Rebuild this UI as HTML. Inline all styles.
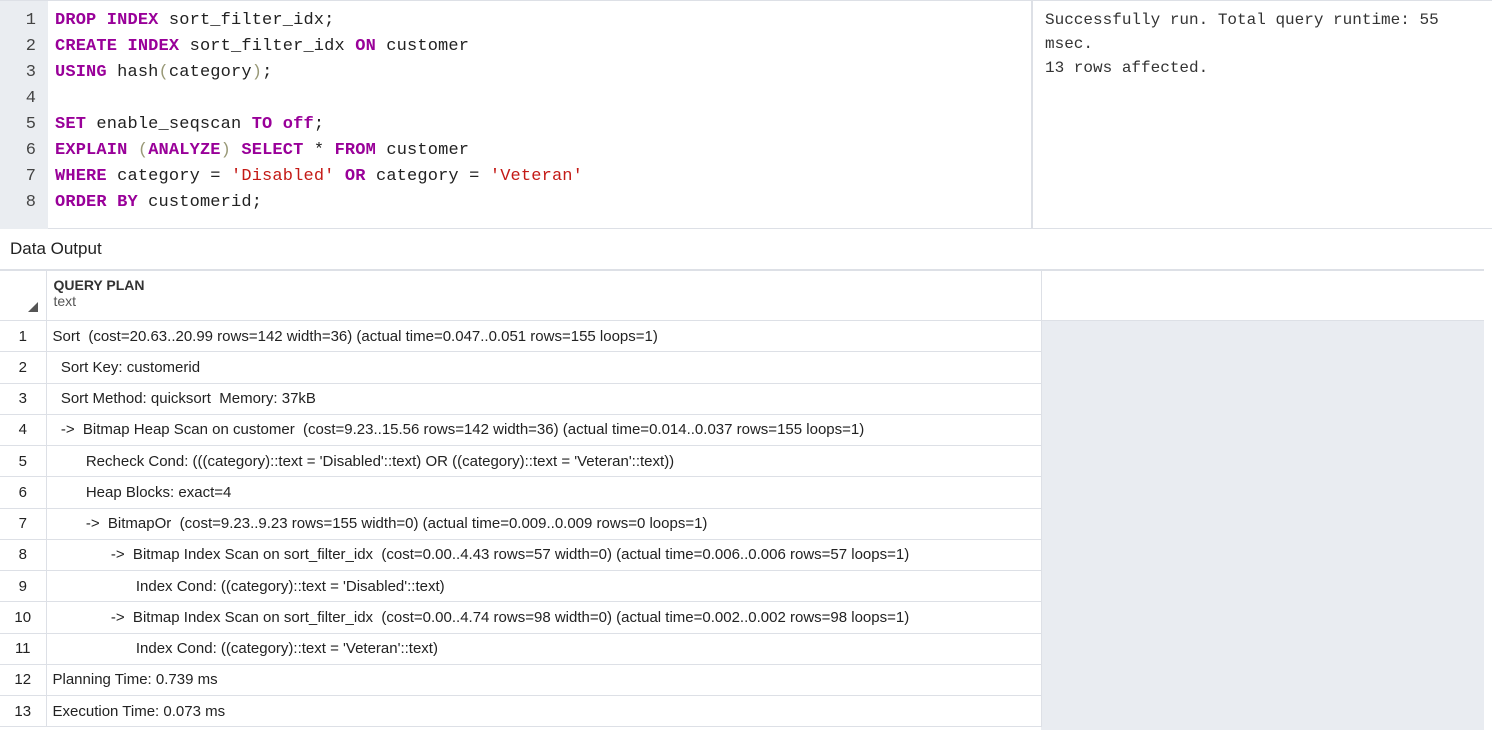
<!DOCTYPE html>
<html><head><meta charset="utf-8"><style>
*{margin:0;padding:0;box-sizing:border-box}
body{width:1492px;height:730px;background:#fff;position:relative;overflow:hidden;font-family:"Liberation Sans",sans-serif}
.ed{position:absolute;left:0;top:0;width:1031px;height:229px;border-top:1px solid #dde0e6;border-bottom:1px solid #dde0e6}
.gut{position:absolute;left:0;top:0;width:48px;height:228px;background:#eaedf1}
.code{position:absolute;left:0;top:7px;font-family:"Liberation Mono",monospace;font-size:17px;letter-spacing:0.15px;color:#222;white-space:pre;line-height:26px}
.ln{display:inline-block;width:36px;text-align:right;color:#444;margin-right:19px;letter-spacing:0}
.k{color:#990099;font-weight:bold}
.s{color:#c41a16}
.p{color:#999977}
.msg{position:absolute;left:1031px;top:0;width:461px;height:229px;border-left:2px solid #dde0e6;border-top:1px solid #dde0e6;border-bottom:1px solid #dde0e6;font-family:"Liberation Mono",monospace;font-size:16px;color:#333;line-height:24px;padding:7px 0 0 12px;white-space:pre}
.dh{position:absolute;left:0;top:230px;width:1484px;height:40px;border-bottom:1px solid #dde0e6;font-size:17px;color:#222;padding:9px 0 0 10px}
.grey{position:absolute;left:1041px;top:320px;width:443px;height:410px;background:#e9ecf1}
table{position:absolute;left:0;top:270px;border-collapse:collapse;font-size:15px;color:#222}
td{border:1px solid #dde0e6;height:31.25px;white-space:pre;padding:0 0 0 6px}
td.i{width:46px;text-align:center;padding:0;border-left:none}
tr.h td{height:50px;vertical-align:top;padding-top:6px}
.tri{position:absolute;left:28px;top:302px;width:0;height:0;border-left:10px solid transparent;border-bottom:10px solid #555}
</style></head><body>
<div class="ed"><div class="gut"></div>
<div class="code"><span class="ln">1</span><span class="k">DROP INDEX</span> sort_filter_idx;
<span class="ln">2</span><span class="k">CREATE INDEX</span> sort_filter_idx <span class="k">ON</span> customer
<span class="ln">3</span><span class="k">USING</span> hash<span class="p">(</span>category<span class="p">)</span>;
<span class="ln">4</span>
<span class="ln">5</span><span class="k">SET</span> enable_seqscan <span class="k">TO off</span>;
<span class="ln">6</span><span class="k">EXPLAIN</span> <span class="p">(</span><span class="k">ANALYZE</span><span class="p">)</span> <span class="k">SELECT</span> * <span class="k">FROM</span> customer
<span class="ln">7</span><span class="k">WHERE</span> category = <span class="s">'Disabled'</span> <span class="k">OR</span> category = <span class="s">'Veteran'</span>
<span class="ln">8</span><span class="k">ORDER BY</span> customerid;</div></div>
<div class="msg">Successfully run. Total query runtime: 55
msec.
13 rows affected.</div>
<div class="dh">Data Output</div>
<div class="grey"></div>
<table>
<tr class="h"><td class="i"></td><td style="width:995px;padding-left:7px;font-size:14px"><span style="font-weight:bold;color:#333">QUERY PLAN</span><br><span style="color:#555">text</span></td><td style="width:443px;border-right:none"></td></tr>
<tr><td class="i">1</td><td>Sort  (cost=20.63..20.99 rows=142 width=36) (actual time=0.047..0.051 rows=155 loops=1)</td></tr>
<tr><td class="i">2</td><td>  Sort Key: customerid</td></tr>
<tr><td class="i">3</td><td>  Sort Method: quicksort  Memory: 37kB</td></tr>
<tr><td class="i">4</td><td>  ->  Bitmap Heap Scan on customer  (cost=9.23..15.56 rows=142 width=36) (actual time=0.014..0.037 rows=155 loops=1)</td></tr>
<tr><td class="i">5</td><td>        Recheck Cond: (((category)::text = 'Disabled'::text) OR ((category)::text = 'Veteran'::text))</td></tr>
<tr><td class="i">6</td><td>        Heap Blocks: exact=4</td></tr>
<tr><td class="i">7</td><td>        ->  BitmapOr  (cost=9.23..9.23 rows=155 width=0) (actual time=0.009..0.009 rows=0 loops=1)</td></tr>
<tr><td class="i">8</td><td>              ->  Bitmap Index Scan on sort_filter_idx  (cost=0.00..4.43 rows=57 width=0) (actual time=0.006..0.006 rows=57 loops=1)</td></tr>
<tr><td class="i">9</td><td>                    Index Cond: ((category)::text = 'Disabled'::text)</td></tr>
<tr><td class="i">10</td><td>              ->  Bitmap Index Scan on sort_filter_idx  (cost=0.00..4.74 rows=98 width=0) (actual time=0.002..0.002 rows=98 loops=1)</td></tr>
<tr><td class="i">11</td><td>                    Index Cond: ((category)::text = 'Veteran'::text)</td></tr>
<tr><td class="i">12</td><td>Planning Time: 0.739 ms</td></tr>
<tr><td class="i">13</td><td>Execution Time: 0.073 ms</td></tr>
</table>
<div class="tri"></div>
</body></html>
